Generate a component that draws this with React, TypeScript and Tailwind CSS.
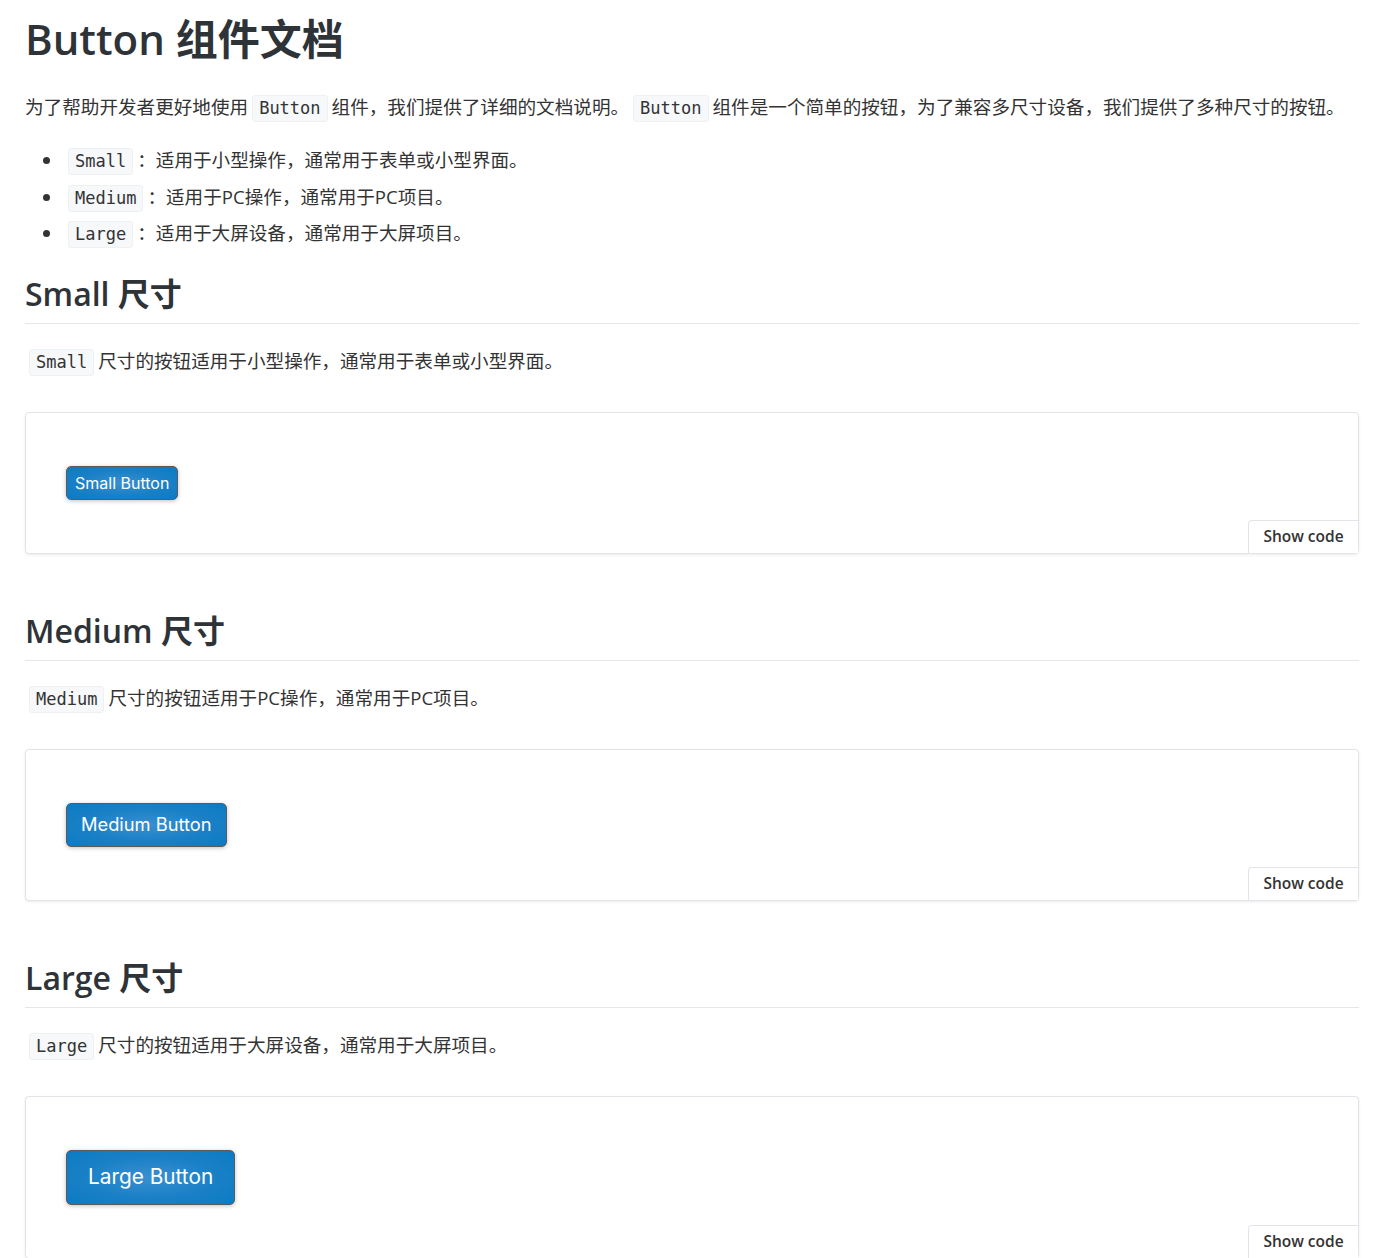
import React from "react";

const sans = "font-['Open_Sans','Noto_Sans_CJK_SC',sans-serif]";

function Code({ children }: { children: React.ReactNode }) {
  return (
    <code className="mx-[4px] inline-block rounded-[3px] border border-[#eef1f4] bg-[#f6f8fa] px-[6px] font-['DejaVu_Sans_Mono',monospace] text-[17px] leading-[25px] text-[#333]">
      {children}
    </code>
  );
}

function Section({
  title,
  desc,
  code,
  btnClass,
  label,
}: {
  title: string;
  desc: string;
  code: string;
  btnClass: string;
  label: string;
}) {
  return (
    <section>
      <h2 className="border-b border-[#e5e7ea] pb-[9px] text-[32px] font-semibold leading-[40px] text-[#2e3338]">
        {title}
      </h2>
      <p className="mt-[22px] text-[18.6px] leading-[29px] text-[#333]">
        <Code>{code}</Code>
        {desc}
      </p>
      <div className="relative mt-[36px] rounded-[4px] border border-[#e1e5e9] bg-white px-10 py-[53px] shadow-[0_1px_3px_rgba(0,0,0,0.08)]">
        <button
          className={`rounded-[5px] border border-[#5b5b5b] bg-[radial-gradient(ellipse_at_center,#3a8fd0_0%,#1a80c6_55%,#0a7bc4_100%)] font-['Inter',sans-serif] text-white shadow-[0_1px_4px_rgba(0,0,0,0.25)] ${btnClass}`}
        >
          {label}
        </button>
        <div className="absolute bottom-0 right-0 flex h-[33px] w-[110px] items-center justify-center rounded-tl-[4px] border-l border-t border-[#e1e5e9] bg-white text-[15.5px] font-semibold text-[#333]">
          Show code
        </div>
      </div>
    </section>
  );
}

export default function App() {
  return (
    <div className={`${sans} min-h-[1258px] bg-white px-[25px] pt-[12px] pb-10 text-[#333]`}>
      <div className="w-[1334px]">
        <h1 className="text-[42px] font-semibold leading-[53px] text-[#2e3338]">Button 组件文档</h1>
        <p className="mt-[27px] text-[18.6px] leading-[29px]">
          为了帮助开发者更好地使用<Code>Button</Code>组件，我们提供了详细的文档说明。
          <Code>Button</Code>组件是一个简单的按钮，为了兼容多尺寸设备，我们提供了多种尺寸的按钮。
        </p>
        <ul className="mt-[23px] list-disc pl-[38px] text-[18.6px] leading-[29px]">
          <li className="h-[36.5px] pl-[1px]">
            <Code>Small</Code>：适用于小型操作，通常用于表单或小型界面。
          </li>
          <li className="h-[36.5px] pl-[1px]">
            <Code>Medium</Code>：适用于PC操作，通常用于PC项目。
          </li>
          <li className="h-[36.5px] pl-[1px]">
            <Code>Large</Code>：适用于大屏设备，通常用于大屏项目。
          </li>
        </ul>
        <div className="mt-[19px]">
          <Section
            title="Small 尺寸"
            code="Small"
            desc="尺寸的按钮适用于小型操作，通常用于表单或小型界面。"
            btnClass="h-[34px] px-[8px] text-[16px]"
            label="Small Button"
          />
        </div>
        <div className="mt-[57px]">
          <Section
            title="Medium 尺寸"
            code="Medium"
            desc="尺寸的按钮适用于PC操作，通常用于PC项目。"
            btnClass="h-[44px] px-[14px] text-[18.3px]"
            label="Medium Button"
          />
        </div>
        <div className="mt-[57px]">
          <Section
            title="Large 尺寸"
            code="Large"
            desc="尺寸的按钮适用于大屏设备，通常用于大屏项目。"
            btnClass="h-[55px] px-[21px] text-[20.8px]"
            label="Large Button"
          />
        </div>
      </div>
    </div>
  );
}
